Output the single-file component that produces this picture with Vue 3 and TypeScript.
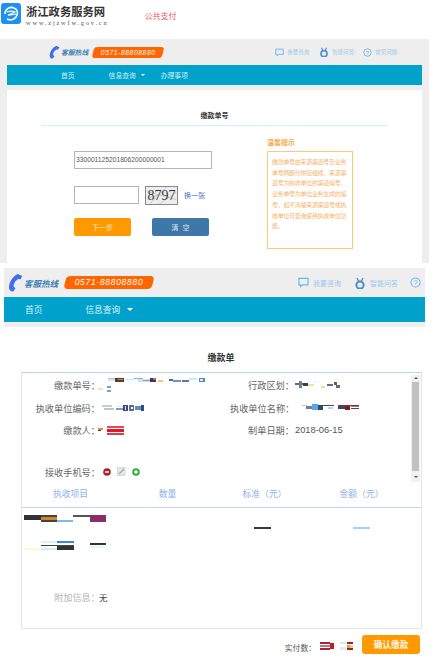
<script setup lang="ts">
import { h } from 'vue'

type Rect = [number, number, number, number, string]

const Mosaic = (props: { w: number; h: number; rects: Rect[] }) =>
  h(
    'svg',
    { width: props.w, height: props.h, viewBox: `0 0 ${props.w} ${props.h}`, style: 'display:block;flex:none' },
    props.rects.map(([x, y, w, hh, fill]) => h('rect', { x, y, width: w, height: hh, fill })),
  )

const tipLines: string[] = [
  '缴款单号由来源渠道号及业务',
  '单号两部分拼接组成，来源渠',
  '道号为执收单位的渠道编号，',
  '业务单号为单位业务生成的编',
  '号，如不清楚来源渠道号或执',
  '收单位可查询使用执收单位功',
  '能。',
]

const orderNo: Rect[] = [
  [10, 1, 8, 1, '#9cc8ee'], [10, 2, 8, 2, '#d6e6f5'], [17, 1, 9, 4, '#5c3a3a'], [20, 2, 5, 1, '#c98a3a'],
  [27, 2, 10, 1, '#d5e8f8'], [36, 1, 9, 1, '#7fb8e8'], [40, 2, 12, 3, '#cfe0ef'], [45, 3, 7, 1, '#8a9bb5'],
  [52, 1, 6, 4, '#2f3a66'], [55, 1, 3, 2, '#b9772e'], [60, 3, 5, 2, '#f4c27a'],
  [71, 2, 4, 2, '#3d6fb5'], [75, 3, 8, 2, '#7c8fb5'], [84, 3, 7, 2, '#5a78a0'], [91, 1, 8, 2, '#cfe8f7'],
  [101, 1, 6, 4, '#4b8fd0'], [102, 2, 3, 2, '#d9eefa'],
  [0, 11, 5, 2, '#fbe3a6'], [9, 9, 4, 2, '#6aa7dd'], [9, 13, 4, 2, '#6aa7dd'],
]
const unitCode: Rect[] = [
  [0, 1, 10, 2, '#c7cdd6'], [2, 4, 10, 2, '#b9c7d4'], [15, 2, 6, 1, '#dfe6ef'], [14, 4, 7, 2, '#8b98aa'],
  [21, 1, 5, 6, '#3b4a80'], [23, 2, 1, 4, '#dfe6ef'], [27, 1, 5, 6, '#5a6c9c'], [29, 3, 2, 2, '#eef2f7'],
  [33, 2, 6, 4, '#6f8ab5'], [39, 1, 3, 6, '#27508a'],
]
const payer: Rect[] = [
  [0, 2, 5, 2, '#d6923f'], [0, 4, 3, 1, '#2f3a55'], [9, 0, 17, 2, '#e84a55'], [9, 3, 17, 3, '#e0182c'], [9, 7, 17, 2, '#e83844'],
]
const region: Rect[] = [
  [0, 2, 9, 2, '#5e6a7e'], [4, 0, 3, 7, '#6f7f96'], [8, 2, 5, 3, '#33415e'], [13, 3, 6, 2, '#f3e1a8'], [19, 0, 2, 1, '#cfe8f7'],
  [26, 5, 4, 2, '#f6e08e'], [32, 3, 6, 2, '#5a6f8e'], [39, 1, 3, 3, '#86532f'], [41, 4, 4, 3, '#4f6d8e'],
]
const unitName: Rect[] = [
  [10, 1, 5, 1, '#a8c8e0'], [14, 2, 6, 3, '#6d7f92'], [20, 0, 6, 6, '#5aa6e6'], [26, 1, 5, 5, '#2f4a6a'],
  [31, 1, 11, 1, '#3c4a5a'], [36, 3, 5, 2, '#b8d4ec'], [46, 1, 21, 1, '#8a3030'], [46, 2, 7, 3, '#3b4a5a'],
  [53, 2, 5, 4, '#7a2020'], [59, 2, 8, 1, '#6a8caa'], [59, 4, 8, 1, '#8a2b5e'],
]
const project: Rect[] = [
  [0, 0, 17, 5, '#333333'], [17, 0, 16, 2, '#444444'], [17, 2, 16, 3, '#c8872a'], [17, 5, 16, 2, '#444444'],
  [33, 5, 16, 2, '#7db9ea'], [49, 0, 17, 2, '#555555'], [66, 0, 16, 7, '#8a2e6b'],
  [17, 26, 16, 2, '#d3f5f7'], [33, 26, 17, 2, '#3a8ad0'], [17, 30, 33, 1, '#444444'], [33, 31, 17, 4, '#333333'],
  [0, 33, 17, 2, '#fdfcc8'], [17, 33, 16, 2, '#c9f1f4'], [66, 28, 16, 2, '#333333'], [66, 31, 16, 2, '#dcf9fb'],
]
const paid: Rect[] = [
  [0, 0, 10, 2, '#a3263a'], [0, 3, 10, 2, '#c5737a'], [0, 6, 10, 2, '#a3263a'], [10, 1, 4, 6, '#c01f1f'],
  [20, 0, 6, 2, '#d5e8f2'], [20, 5, 6, 3, '#e3e9ee'], [27, 0, 6, 2, '#8b2c2c'], [27, 3, 3, 3, '#e0a33e'],
  [30, 3, 3, 3, '#f0cf86'], [27, 6, 6, 2, '#8b2c2c'],
]
</script>

<template>
  <div class="page">
    <header class="top">
      <svg class="logo" viewBox="0 0 20 21">
        <rect width="20" height="21" rx="3" fill="#1e90f0" />
        <path d="M4 11c0-5 5-8 9-6 3 1 4 4 3 7-1 4-6 6-10 4" fill="none" stroke="#fff" stroke-width="1.6" />
        <path d="M6 9c3-1 6-1 8 0-2 1-5 2-7 3 3 0 5 0 8-1" fill="none" stroke="#fff" stroke-width="1.3" />
      </svg>
      <div class="brand">
        <div class="brand-name">浙江政务服务网</div>
        <div class="brand-url">www.zjzwfw.gov.cn</div>
      </div>
      <div class="public-pay">公共支付</div>
    </header>

    <section class="shell-one">
      <div class="bar-one">
        <svg class="phone-one" viewBox="0 0 16 20">
          <path d="M10.5 1 15 3l-1.5 3.5-2.5-.3C8 7.500 6 11 5.800 14L8 16l-2.500 3.500C3 20 1 18 1 15 1.500 8.500 6 3 10.500 1z" fill="#3f6ff0" />
        </svg>
        <span class="hot-label">客服热线</span>
        <span class="pill">0571-88808880</span>
        <span class="tools">
          <svg class="ic-one" viewBox="0 0 12 11"><path d="M1 1h10v7H5L3 10V8H1z" fill="none" stroke="#6ab8ea" stroke-width="1.3" /></svg>
          <span class="tool-text">我要咨询</span>
          <svg class="ic-one rabbit" viewBox="0 0 12 12"><path d="M3 1l2 4M9 1L7 5" stroke="#4a90d0" stroke-width="1.4" /><circle cx="6" cy="8" r="3.6" fill="none" stroke="#4a90d0" stroke-width="2" /></svg>
          <span class="tool-text">智能问答</span>
          <svg class="ic-one qmark" viewBox="0 0 12 12"><circle cx="6" cy="6" r="5" fill="none" stroke="#6ab8ea" stroke-width="1.1" /><text x="6" y="9" text-anchor="middle" font-size="8" fill="#6ab8ea" font-family="Liberation Sans, sans-serif">?</text></svg>
          <span class="tool-text">常见问题</span>
        </span>
      </div>
      <nav class="nav-one">
        <span class="n1-home">首页</span>
        <span class="n1-info">信息查询</span>
        <i class="caret"></i>
        <span class="n1-work">办理事项</span>
      </nav>
      <main class="panel">
        <h2 class="panel-title">缴款单号</h2>
        <div class="panel-body">
          <div class="form">
            <div class="input wide">330001125201806200000001</div>
            <div class="captcha-row">
              <div class="input short"></div>
              <div class="captcha">
                <span>8797</span>
                <svg class="noise" viewBox="0 0 33 19">
                  <path d="M0 5l33 9M4 18L22 0M14 19L33 6M0 13l12-4" stroke="#999" stroke-width=".5" fill="none" />
                </svg>
              </div>
              <span class="swap">换一张</span>
            </div>
            <div class="btn-row">
              <button class="btn next">下一步</button>
              <button class="btn clear">清空</button>
            </div>
          </div>
          <aside class="tips">
            <div class="tips-title">温馨提示</div>
            <div class="tips-box">
              <div v-for="line in tipLines" :key="line" class="tip-line">{{ line }}</div>
            </div>
          </aside>
        </div>
      </main>
    </section>

    <section class="shell-two">
      <div class="bar-two">
        <svg class="phone-two" viewBox="0 0 16 20">
          <path d="M10.5 1 15 3l-1.500 3.500-2.500-.3C8 7.500 6 11 5.800 14L8 16l-2.500 3.500C3 20 1 18 1 15 1.500 8.500 6 3 10.500 1z" fill="#3f6ff0" />
        </svg>
        <span class="hot-label two">客服热线</span>
        <span class="pill two">0571-88808880</span>
        <span class="tools two">
          <svg class="ic-two" viewBox="0 0 12 11"><path d="M1 1h10v7H5L3 10V8H1z" fill="none" stroke="#6ab8ea" stroke-width="1.3" /></svg>
          <span class="tool-text two">我要咨询</span>
          <svg class="ic-two rabbit2" viewBox="0 0 12 12"><path d="M3 1l2 4M9 1L7 5" stroke="#4a90d0" stroke-width="1.4" /><circle cx="6" cy="8" r="3.6" fill="none" stroke="#4a90d0" stroke-width="2" /></svg>
          <span class="tool-text two">智能问答</span>
          <svg class="ic-two qmark2" viewBox="0 0 12 12"><circle cx="6" cy="6" r="5" fill="none" stroke="#6ab8ea" stroke-width="1.1" /><text x="6" y="9" text-anchor="middle" font-size="8" fill="#6ab8ea" font-family="Liberation Sans, sans-serif">?</text></svg>
        </span>
      </div>
      <nav class="nav-two">
        <span class="n2-home">首页</span>
        <span class="n2-info">信息查询</span>
        <i class="caret big"></i>
      </nav>
    </section>

    <h1 class="bill-title">缴款单</h1>

    <section class="card">
      <div class="scroll-area">
        <div class="fields">
          <div class="row first">
            <div class="cell"><label class="lbl">缴款单号：</label><Mosaic :w="110" :h="16" :rects="orderNo" /></div>
            <div class="cell"><label class="lbl r">行政区划：</label><Mosaic class="nudge-right" :w="46" :h="8" :rects="region" /></div>
          </div>
          <div class="row">
            <div class="cell"><label class="lbl">执收单位编码：</label><Mosaic class="shift" :w="42" :h="8" :rects="unitCode" /></div>
            <div class="cell"><label class="lbl r">执收单位名称：</label><Mosaic class="nudge-left" :w="68" :h="7" :rects="unitName" /></div>
          </div>
          <div class="row">
            <div class="cell"><label class="lbl">缴款人：</label><Mosaic :w="27" :h="9" :rects="payer" /></div>
            <div class="cell"><label class="lbl r">制单日期：</label><span class="date">2018-06-15</span></div>
          </div>
          <div class="phone-row">
            <label class="lbl">接收手机号：</label>
            <svg class="act" viewBox="0 0 8 8"><circle cx="4" cy="4" r="3.8" fill="#a92424" /><rect x="2" y="3.3" width="4" height="1.4" fill="#fff" /></svg>
            <svg class="act mid" viewBox="0 0 9 9"><rect x="0.5" y="0.5" width="7.5" height="8" fill="#dde9f3" stroke="#b8c6d2" stroke-width=".6" /><path d="M2 7l5-5" stroke="#caa544" stroke-width="1.2" /></svg>
            <svg class="act" viewBox="0 0 8 8"><circle cx="4" cy="4" r="3.8" fill="#2fae3a" /><path d="M4 2v4M2 4h4" stroke="#fff" stroke-width="1.3" /></svg>
          </div>
        </div>
        <div class="scrollbar">
          <i class="arrow up"></i>
          <div class="thumb"></div>
          <i class="arrow down"></i>
        </div>
      </div>
      <div class="table-head">
        <span>执收项目</span><span>数量</span><span>标准（元）</span><span>金额（元）</span>
      </div>
      <div class="table-body">
        <div class="col-item"><Mosaic :w="82" :h="35" :rects="project" /></div>
        <div class="col-bars">
          <i class="bar dark"></i>
          <i class="bar light"></i>
        </div>
      </div>
      <div class="extra"><label class="lbl gray">附加信息：</label><span class="none">无</span></div>
    </section>

    <footer class="foot">
      <span class="paid">实付数：</span>
      <Mosaic :w="33" :h="8" :rects="paid" />
      <button class="confirm">确认缴款</button>
    </footer>
  </div>
</template>

<style>
html, body { margin: 0; padding: 0; background: #fff; }
</style>

<style scoped>
* { box-sizing: border-box; }
.page {
  width: 437px; height: 659px; overflow: hidden; background: #fff; color: #333;
  font-family: "Noto Sans CJK SC", "Liberation Sans", sans-serif;
}
.top { height: 39px; display: flex; align-items: flex-start; padding: 3px 0 0 1px; }
.logo { width: 20px; height: 21px; flex: none; }
.brand { margin-left: 5px; margin-top: 2px; }
.brand-name { font-size: 11.3px; line-height: 13px; font-weight: 700; color: #333; white-space: nowrap; }
.brand-url { font-family: "Liberation Serif", serif; font-size: 6.5px; line-height: 8px; letter-spacing: 1.75px; color: #555; margin-top: 1px; white-space: nowrap; }
.public-pay { margin-left: 36px; margin-top: 8px; font-size: 8px; line-height: 10px; color: #f0555f; }

.shell-one { width: 429px; height: 224px; background: #eeeeee; display: flex; flex-direction: column; }
.bar-one { height: 26px; display: flex; align-items: center; padding-left: 49px; }
.phone-one { width: 11px; height: 14px; flex: none; }
.hot-label { margin-left: 1px; font-size: 6.8px; font-weight: 700; font-style: italic; color: #3f7fb5; white-space: nowrap; }
.pill {
  position: relative; isolation: isolate;
  margin-left: 5px; width: 70px; height: 11px; color: #fff;
  font-family: "Liberation Sans", sans-serif; font-style: italic; font-size: 6.8px; line-height: 11px; letter-spacing: .55px; text-align: center; white-space: nowrap;
}
.pill::before { content: ""; position: absolute; inset: 0; z-index: -1; border-radius: 3px; background: #ff6600; transform: skewX(-14deg); }
.tools { display: flex; align-items: center; margin-left: 112px; }
.ic-one { width: 9px; height: 9px; flex: none; }
.tool-text { margin-left: 3px; font-size: 5.5px; color: #9cc9e8; white-space: nowrap; }
.rabbit { margin-left: 10px; width: 10px; height: 10px; }
.qmark { margin-left: 9px; }
.nav-one { margin: 0 7px; height: 20px; background: #00a2cb; color: #cdeef7; font-size: 6.8px; display: flex; align-items: center; padding-left: 54px; flex: none; }
.n1-info { margin-left: 34px; }
.n1-work { margin-left: 16px; }
.caret { width: 0; height: 0; margin-left: 5px; border-left: 2px solid transparent; border-right: 2px solid transparent; border-top: 2px solid #fff; }
.caret.big { margin-left: 7px; border-left-width: 3px; border-right-width: 3px; border-top-width: 3px; }
.panel { margin: 5px 7px 0; background: #fff; flex: 1; }
.panel-title { margin: 0 34px; height: 36px; padding-top: 20px; border-bottom: 1px solid #cdf3fb; font-size: 7px; line-height: 10px; font-weight: 700; color: #333; text-align: center; }
.panel-body { display: flex; padding-left: 67px; }
.form { width: 193px; padding-top: 25px; }
.input { border: 1px solid #b5b5b5; background: #fff; }
.wide { width: 138px; height: 18px; font-family: "Liberation Sans", sans-serif; font-size: 6.7px; line-height: 16px; padding-left: 1px; color: #555; }
.captcha-row { display: flex; align-items: flex-start; margin-top: 17px; }
.short { width: 65px; height: 18px; }
.captcha { position: relative; margin-left: 6px; width: 33px; height: 19px; border: 1px solid #888; background: #eee; font-family: "Liberation Serif", serif; font-size: 14px; line-height: 17px; text-align: center; color: #333; overflow: hidden; }
.noise { position: absolute; inset: 0; width: 100%; height: 100%; }
.swap { margin-left: 6px; margin-top: 5px; font-size: 7px; line-height: 9px; color: #3f6fc0; }
.btn-row { display: flex; margin-top: 13px; }
.btn { width: 57px; height: 18px; border: 0; padding: 0; border-radius: 2px; color: #f3e8d8; font-family: inherit; font-size: 7px; line-height: 18px; }
.next { background: #ff9900; }
.clear { margin-left: 21px; background: #3d78a8; color: #dde8f0; letter-spacing: 4px; text-indent: 4px; }
.tips { padding-top: 11px; }
.tips-title { font-size: 7px; line-height: 10px; font-weight: 700; color: #f9a84a; }
.tips-box { margin-top: 4px; width: 86px; height: 98px; border: 1px solid #fdc878; padding: 5px 4px 0 4px; font-size: 6px; letter-spacing: -.3px; line-height: 10.7px; color: #f6b36a; }
.tip-line { white-space: nowrap; }

.shell-two { margin: 5px 0 0 4px; width: 421px; height: 59px; background: #eeeeee; }
.bar-two { height: 29px; display: flex; align-items: center; padding-left: 4px; overflow: hidden; }
.phone-two { width: 15px; height: 19px; flex: none; }
.hot-label.two { margin-left: 1px; font-size: 8.5px; }
.pill.two { margin-left: 7px; width: 88px; height: 13px; font-size: 8.5px; line-height: 13px; letter-spacing: .7px; }
.pill.two::before { border-radius: 4px; }
.tools.two { margin-left: 145px; flex: none; }
.ic-two { width: 11px; height: 11px; flex: none; }
.tool-text.two { margin-left: 4px; font-size: 7px; }
.rabbit2 { margin-left: 13px; width: 12px; height: 12px; }
.qmark2 { margin-left: 12px; }
.nav-two { height: 25px; background: #00a2cb; color: #d8f2f9; font-size: 8.7px; display: flex; align-items: center; padding-left: 21px; }
.n2-info { margin-left: 43px; }

.bill-title { margin: 0; padding-top: 26px; height: 45px; font-size: 9px; line-height: 10px; font-weight: 700; color: #333; text-align: center; width: 442px; }

.card { margin-left: 21px; width: 401px; height: 257px; border: 1px solid #e6e6e6; border-top: 1px solid #b9d2f6; display: flex; flex-direction: column; }
.scroll-area { height: 112px; display: flex; flex: none; }
.fields { flex: 1; padding-top: 1px; }
.row { display: grid; grid-template-columns: 208px 1fr; height: 22.5px; }
.cell { display: flex; align-items: center; }
.lbl { flex: none; width: 78px; margin-right: -2px; text-align: right; font-size: 9.2px; line-height: 12px; color: #666; white-space: nowrap; }
.lbl.r { width: 64px; margin-right: 0; }
.shift { margin-left: 4px; }
.nudge-right { margin-left: 1px; }
.nudge-left { margin-left: -2px; }
.date { font-family: "Liberation Sans", sans-serif; font-size: 9.3px; color: #555; margin-left: 1px; }
.phone-row { display: flex; align-items: center; margin-top: 22px; height: 16px; }
.act { width: 8px; height: 8px; margin-left: 5px; flex: none; }
.act.mid { width: 9px; height: 9px; margin-left: 6px; margin-right: 1px; }
.scrollbar { width: 9px; margin: 2px 1px 0 0; height: 107px; background: #f1f1f1; display: flex; flex-direction: column; align-items: center; flex: none; }
.thumb { width: 7px; height: 89px; margin: 3px 0; background: #c1c1c1; flex: none; }
.arrow { width: 0; height: 0; border-left: 2px solid transparent; border-right: 2px solid transparent; flex: none; margin-top: 2px; }
.arrow.up { border-bottom: 2px solid #555; }
.arrow.down { border-top: 2px solid #555; }
.table-head { height: 23px; border-bottom: 1px solid #bcd6f8; padding: 0 12px 6px 0; display: grid; grid-template-columns: repeat(4, 97px); align-items: center; font-size: 8.8px; color: #8eb1ee; text-align: center; flex: none; white-space: nowrap; }
.table-body { display: flex; flex: none; height: 72px; padding: 7px 0 0 2px; }
.col-item { width: 230px; }
.col-bars { display: flex; margin-top: 12px; height: 2px; }
.bar { display: block; width: 17px; height: 2px; }
.bar.dark { background: #3a3a3a; }
.bar.light { margin-left: 82px; background: #9ad6fb; }
.extra { display: flex; align-items: center; margin-top: 11px; }
.lbl.gray { color: #b5b5b5; }
.none { margin-left: 1px; font-size: 8.5px; color: #444; }
.foot { display: flex; align-items: center; justify-content: flex-end; margin-top: 6px; padding-right: 17px; height: 19px; }
.paid { font-size: 7.8px; color: #555; margin-top: 6px; }
.foot > svg { margin-left: 4px; margin-top: 2px; }
.confirm { margin-left: 9px; width: 58px; height: 19px; border: 0; padding: 0; border-radius: 3px; background: #ff9900; color: #fff6e6; font-family: inherit; font-size: 8.7px; font-weight: 700; line-height: 19px; }
</style>
